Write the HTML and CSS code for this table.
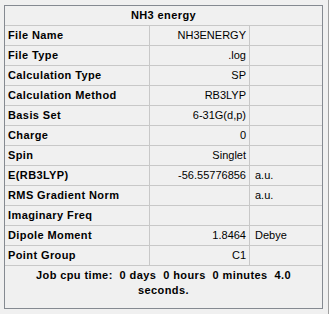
FILE: index.html
```html
<!DOCTYPE html>
<html>
<head>
<meta charset="utf-8">
<title>NH3 energy</title>
<link rel="stylesheet" href="styles.css">
</head>
<body>
<div class="window">
  <div class="summary">
    <div class="title">NH3 energy</div>
    <div class="row"><div class="label">File Name</div><div class="value">NH3ENERGY</div><div class="unit"></div></div>
    <div class="row"><div class="label">File Type</div><div class="value">.log</div><div class="unit"></div></div>
    <div class="row"><div class="label">Calculation Type</div><div class="value">SP</div><div class="unit"></div></div>
    <div class="row"><div class="label">Calculation Method</div><div class="value">RB3LYP</div><div class="unit"></div></div>
    <div class="row"><div class="label">Basis Set</div><div class="value">6-31G(d,p)</div><div class="unit"></div></div>
    <div class="row"><div class="label">Charge</div><div class="value">0</div><div class="unit"></div></div>
    <div class="row"><div class="label">Spin</div><div class="value">Singlet</div><div class="unit"></div></div>
    <div class="row"><div class="label">E(RB3LYP)</div><div class="value">-56.55776856</div><div class="unit">a.u.</div></div>
    <div class="row"><div class="label">RMS Gradient Norm</div><div class="value"></div><div class="unit">a.u.</div></div>
    <div class="row"><div class="label">Imaginary Freq</div><div class="value"></div><div class="unit"></div></div>
    <div class="row"><div class="label">Dipole Moment</div><div class="value">1.8464</div><div class="unit">Debye</div></div>
    <div class="row"><div class="label">Point Group</div><div class="value">C1</div><div class="unit"></div></div>
    <div class="footer">Job cpu time:  0 days  0 hours  0 minutes  4.0<br>seconds.</div>
  </div>
</div>
</body>
</html>
```
FILE: styles.css
```css
html, body {
  margin: 0;
  padding: 0;
  background: #f0f0f0;
}

.window {
  box-sizing: border-box;
  width: 329px;
  height: 314px;
  padding: 5px 0 0 4px;
  border-right: 1px solid #a0a0a0;
  font-family: "Liberation Sans", Arial, sans-serif;
  font-size: 11px;
  color: #000;
}

.summary {
  box-sizing: border-box;
  width: 319px;
  height: 304px;
  border: 1px solid #858a91;
  display: flex;
  flex-direction: column;
}

.title {
  height: 19px;
  line-height: 19px;
  border-bottom: 1px solid #c8c8c8;
  text-align: center;
  font-weight: bold;
  letter-spacing: 0.4px;
}

.row {
  display: flex;
  height: 19px;
  line-height: 19px;
  border-bottom: 1px solid #c8c8c8;
}

.label {
  box-sizing: border-box;
  width: 145px;
  padding-left: 3px;
  border-right: 1px solid #c8c8c8;
  font-weight: bold;
  letter-spacing: 0.4px;
  white-space: nowrap;
}

.value {
  box-sizing: border-box;
  width: 100px;
  padding-right: 3px;
  border-right: 1px solid #c8c8c8;
  text-align: right;
  white-space: nowrap;
}

.unit {
  flex: 1;
  padding-left: 5px;
  white-space: nowrap;
}

.footer {
  flex: 1;
  padding-top: 2px;
  line-height: 15px;
  text-align: center;
  font-weight: bold;
  letter-spacing: 0.4px;
  white-space: pre;
}
```
